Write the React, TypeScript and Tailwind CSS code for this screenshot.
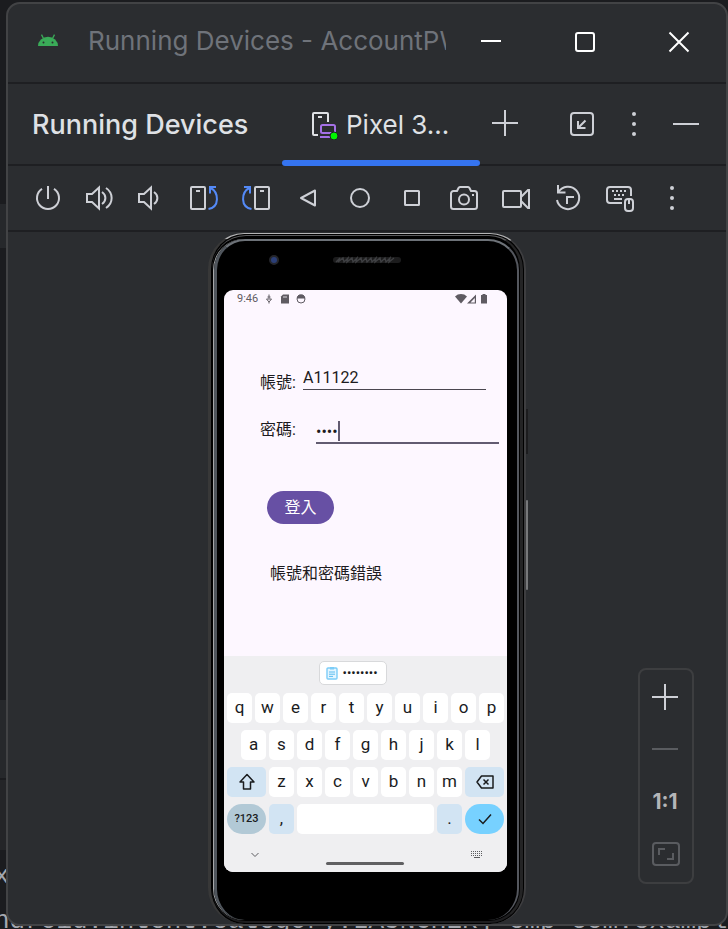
import type { ReactNode } from "react";

function Icon({ children }: { children: ReactNode }) {
  return (
    <svg
      viewBox="0 0 32 32"
      className="block size-8 shrink-0"
      fill="none"
      stroke="currentColor"
      strokeWidth="2"
      aria-hidden="true"
    >
      {children}
    </svg>
  );
}

function Dots() {
  return (
    <g fill="currentColor" stroke="none">
      <circle cx="16" cy="6" r="2" />
      <circle cx="16" cy="16" r="2" />
      <circle cx="16" cy="26" r="2" />
    </g>
  );
}

const speaker = <path d="M3 12h5l7-6.500v21L8 20H3z" />;
const rotate = (
  <>
    <rect x="3" y="5" width="14" height="22" rx="1" />
    <path d="M8 9h4" />
    <g stroke="#548af7">
      <path d="M28 5h-6v6.500" />
      <path d="M22 5.500C31.500 10.500 31.500 25 20.500 27" />
    </g>
  </>
);

const tools: { name: string; art: ReactNode }[] = [
  {
    name: "Power",
    art: (
      <>
        <path d="M16 4v13" />
        <path d="M10 6.800A11 11 0 1 0 22 6.800" />
      </>
    ),
  },
  {
    name: "Volume Up",
    art: (
      <>
        {speaker}
        <path d="M18 10c4.500 3 4.500 9 0 12M22 6c7.500 5 7.500 15 0 20" />
      </>
    ),
  },
  {
    name: "Volume Down",
    art: (
      <>
        {speaker}
        <path d="M18 10c4.500 3 4.500 9 0 12" />
      </>
    ),
  },
  { name: "Rotate Left", art: rotate },
  { name: "Rotate Right", art: <g transform="matrix(-1 0 0 1 32 0)">{rotate}</g> },
  { name: "Back", art: <path d="M23 8.500v15L9 16z" strokeLinejoin="round" /> },
  { name: "Home", art: <circle cx="16" cy="16" r="9" /> },
  { name: "Overview", art: <rect x="9" y="9" width="14" height="14" rx="0.500" /> },
  {
    name: "Take Screenshot",
    art: (
      <>
        <path
          d="M3 11.500A2.500 2.500 0 0 1 5.500 9H9l1.500-3A2 2 0 0 1 12 5h8a2 2 0 0 1 1.500 1L23 9h3.500a2.500 2.500 0 0 1 2.500 2.500v13a2.500 2.500 0 0 1-2.500 2.500h-21A2.500 2.500 0 0 1 3 24.500z"
          strokeLinejoin="round"
        />
        <circle cx="16" cy="17.500" r="5" />
        <path d="M24 13h2" />
      </>
    ),
  },
  {
    name: "Record Screen",
    art: (
      <>
        <rect x="3" y="9" width="18" height="16" rx="1" />
        <path d="M21 15l7-7h1v18h-1l-7-7" />
      </>
    ),
  },
  {
    name: "Snapshots",
    art: (
      <>
        <path d="M6 3v7.500h7.500" />
        <path d="M6.500 10A11.200 11.200 0 1 1 5 18" />
        <path d="M15 22v-7h7" />
      </>
    ),
  },
  {
    name: "Hardware Input",
    art: (
      <>
        <path d="M18 21H6a3 3 0 0 1-3-3V8a3 3 0 0 1 3-3h18a3 3 0 0 1 3 3v6" />
        <path d="M8 9h16M10 13h12" strokeDasharray="2 2" />
        <path d="M10 17h8" />
        <rect x="21" y="17" width="8" height="12" rx="3" />
        <path d="M25 17v5" />
      </>
    ),
  },
  { name: "More", art: <Dots /> },
];

function WindowTitle() {
  const control = "flex w-[94px] shrink-0 items-center justify-center pb-[2px] text-white";
  return (
    <header className="flex h-[80px] border-b-2 border-[#1e1f22] pl-[30px]">
      <svg viewBox="0 0 20 12" className="mt-[30px] h-3 w-5 shrink-0" aria-hidden="true">
        <path d="M0 12A10 9.300 0 0 1 20 12z" fill="#3aab58" />
        <path d="M5.500 4.500L3.500 .6M14.500 4.500L16.500 .6" stroke="#3aab58" strokeWidth="1.300" />
        <circle cx="5.500" cy="8.500" r="1" fill="#2b2d30" />
        <circle cx="14.500" cy="8.500" r="1" fill="#2b2d30" />
      </svg>
      <h1 className="-mr-[2px] ml-[30px] min-w-0 flex-1 overflow-hidden pt-[20px] text-[26px] leading-[34px] whitespace-nowrap text-[#6f737a]">
        Running Devices - AccountPW
      </h1>
      <button aria-label="Minimize" className={control}>
        <Icon>
          <path d="M6 15h20" />
        </Icon>
      </button>
      <button aria-label="Maximize" className={control}>
        <Icon>
          <rect x="7" y="7" width="18" height="18" rx="2" />
        </Icon>
      </button>
      <button aria-label="Close" className={control}>
        <Icon>
          <path d="M6.500 6.500l19 19M25.500 6.500l-19 19" />
        </Icon>
      </button>
    </header>
  );
}

function DeviceTabs() {
  const control = "flex w-[52px] shrink-0 items-center justify-center";
  return (
    <div className="flex h-[82px] border-b-2 border-[#1e1f22] pr-[14px] pl-[24px] text-[#ced0d6]">
      <h2 className="w-[250px] shrink-0 pt-[24px] text-[27px] leading-[34px] font-medium whitespace-nowrap text-[#dfe1e5]">
        Running Devices
      </h2>
      <button
        role="tab"
        aria-selected="true"
        className="relative flex w-[198px] shrink-0 items-start pt-[24px] pl-[26px] text-[26px] leading-[34px] whitespace-nowrap text-[#dfe1e5]"
      >
        <Icon>
          <path d="M10 27H6a1 1 0 0 1-1-1V6a1 1 0 0 1 1-1h13a1 1 0 0 1 1 1v8" />
          <path d="M10 9h4" />
          <g stroke="#a571e6">
            <rect x="13" y="17" width="14" height="8" rx="1.500" />
            <path d="M12 29h10" />
          </g>
          <circle cx="26" cy="28" r="4" fill="#00f500" stroke="#1e1f22" strokeWidth="1" />
        </Icon>
        <span className="ml-[6px]">Pixel 3...</span>
        <span className="absolute inset-x-0 -bottom-[2px] h-[6px] rounded-full bg-[#3574f0]" />
      </button>
      <button aria-label="Add device" className="flex w-[50px] shrink-0 items-center justify-center">
        <Icon>
          <path d="M3 15h26M16 2v26" />
        </Icon>
      </button>
      <div className="flex-1" />
      <button aria-label="Dock" className={control}>
        <Icon>
          <rect x="5" y="5" width="22" height="22" rx="3" />
          <path d="M19.500 12.500l-7.500 7.500M12 13v7h7.500" />
        </Icon>
      </button>
      <button aria-label="Options" className={control}>
        <Icon>
          <Dots />
        </Icon>
      </button>
      <button aria-label="Hide" className={control}>
        <Icon>
          <path d="M3 16h26" />
        </Icon>
      </button>
    </div>
  );
}

function Toolbar() {
  return (
    <div className="flex h-[66px] border-b-2 border-[#1e1f22] pl-[14px] text-[#ced0d6]">
      {tools.map((tool) => (
        <button
          key={tool.name}
          aria-label={tool.name}
          className="flex w-[52px] shrink-0 items-center justify-center"
        >
          <Icon>{tool.art}</Icon>
        </button>
      ))}
    </div>
  );
}

function StatusBar() {
  return (
    <div className="flex h-[18px] items-center pr-[18px] pl-[13px] text-[#5f5b62]">
      <span className="w-[26px] text-[11px] leading-[18px]">9:46</span>
      <svg viewBox="0 0 46 12" className="h-3 w-[46px]" fill="none" stroke="currentColor" aria-hidden="true">
        <path d="M6 1.500v4M4.500 4h3M3.500 6L6 9l2.500-3zM6 9v1.500" />
        <path d="M20 1.500h6v9h-8v-7z" fill="currentColor" stroke="none" />
        <path d="M21 3v2M23 3v2" stroke="#fdf7ff" strokeWidth="0.800" />
        <circle cx="38" cy="6" r="4" />
        <path d="M34 5l2-3h4l2 3z" fill="currentColor" />
      </svg>
      <div className="flex-1" />
      <svg viewBox="0 0 34 12" className="h-3 w-[34px]" fill="currentColor" aria-hidden="true">
        <path d="M0 3.500a8.500 8.500 0 0 1 12 0L6 10.500z" />
        <path d="M21 1.500v9H12zM19.800 5L15.500 9.500h4.300z" fillRule="evenodd" />
        <path d="M26 2h1.500V1h3v1H32v8.500h-6z" />
      </svg>
    </div>
  );
}

function LoginForm() {
  return (
    <form className="flex flex-1 flex-col items-start text-[16px] leading-[24px] text-[#1d1b20]">
      <div className="mt-[58px] flex items-end pl-[36px]">
        <label htmlFor="account" className="w-[43px]">
          帳號:
        </label>
        <input
          id="account"
          defaultValue="A11122"
          className="mb-[5px] h-[24px] w-[183px] border-b border-[#4a464f] bg-transparent outline-none"
        />
      </div>
      <div className="mt-[23px] flex items-start pl-[36px]">
        <label htmlFor="password" className="w-[56px]">
          密碼:
        </label>
        <div className="relative">
          <input
            id="password"
            type="password"
            defaultValue="1112"
            className="block h-[26px] w-[183px] border-b-2 border-[#625b71] bg-transparent pt-[2px] outline-none"
          />
          <span className="absolute top-[3px] left-[22px] h-[20px] w-[2px] bg-[#625b71]" />
        </div>
      </div>
      <button
        type="button"
        className="mt-[47px] ml-[43px] h-[33px] w-[67px] rounded-full bg-[#6750a4] text-white"
      >
        登入
      </button>
      <output className="mt-[38px] ml-[46px]">帳號和密碼錯誤</output>
    </form>
  );
}

function Key({ label, kind = "flex-1 bg-white" }: { label: string; kind?: string }) {
  return (
    <button className={`flex h-[30px] min-w-0 items-center justify-center rounded-[5px] text-[17px] ${kind}`}>
      {label}
    </button>
  );
}

function Keyboard() {
  return (
    <div className="flex flex-col bg-[#efeff1] text-[#1a1c1e]">
      <div className="flex h-[37px] justify-center pt-[5px] pr-[26px]">
        <button
          aria-label="Paste"
          className="flex h-[24px] w-[68px] items-center rounded-[5px] border border-[#d8d9db] bg-white pl-[6px]"
        >
          <svg viewBox="0 0 12 14" className="h-[14px] w-3" aria-hidden="true">
            <rect x="1" y="2" width="10" height="11" rx="1" fill="#e4f5ff" stroke="#7ccdf8" strokeWidth="1.400" />
            <path d="M4 1h4v2.500H4z" fill="#7ccdf8" />
            <path d="M3 6h6M3 8.200h6M3 10.400h4" stroke="#5cbdf0" />
          </svg>
          <span className="ml-[5px] text-[13px] leading-[20px]">••••••••</span>
        </button>
      </div>
      <div className="flex flex-col gap-[7px] px-[3px]">
        <div className="flex gap-[3px]">
          {"qwertyuiop".split("").map((k) => (
            <Key key={k} label={k} />
          ))}
        </div>
        <div className="flex gap-[3px] px-[14px]">
          {"asdfghjkl".split("").map((k) => (
            <Key key={k} label={k} />
          ))}
        </div>
        <div className="flex gap-[3px]">
          <button aria-label="Shift" className="flex h-[30px] w-[39px] items-center justify-center rounded-[5px] bg-[#d2e4f3]">
            <svg viewBox="0 0 18 18" className="size-[18px]" fill="none" stroke="currentColor" strokeWidth="1.500" aria-hidden="true">
              <path d="M9 1.500l7 7.500h-3.500v7h-7V9H2z" strokeLinejoin="round" />
            </svg>
          </button>
          {"zxcvbnm".split("").map((k) => (
            <Key key={k} label={k} />
          ))}
          <button aria-label="Backspace" className="flex h-[30px] w-[39px] items-center justify-center rounded-[5px] bg-[#d2e4f3]">
            <svg viewBox="0 0 18 16" className="h-4 w-[18px]" fill="none" stroke="currentColor" strokeWidth="1.500" aria-hidden="true">
              <path d="M5.500 2H17v12H5.500L1 8z" strokeLinejoin="round" />
              <path d="M7.500 5.500l5 5M12.500 5.500l-5 5" />
            </svg>
          </button>
        </div>
        <div className="flex gap-[3px]">
          <button className="h-[30px] w-[39px] rounded-full bg-[#b2c9d6] text-[11px] font-medium">?123</button>
          <Key label="," kind="w-[25px] bg-[#d2e4f3]" />
          <button aria-label="Space" className="h-[30px] flex-1 rounded-[5px] bg-white" />
          <Key label="." kind="w-[25px] bg-[#d2e4f3]" />
          <button aria-label="Enter" className="flex h-[30px] w-[39px] items-center justify-center rounded-full bg-[#77d1ff]">
            <svg viewBox="0 0 14 12" className="h-3 w-[14px]" fill="none" stroke="currentColor" strokeWidth="1.500" aria-hidden="true">
              <path d="M1 6.500l4 4L13 1.500" />
            </svg>
          </button>
        </div>
      </div>
      <div className="relative flex h-[38px] items-start justify-between pt-[14px] pr-[24px] pl-[26px] text-[#5c5d60]">
        <svg viewBox="0 0 10 12" className="h-3 w-[10px]" fill="none" stroke="currentColor" aria-hidden="true">
          <path d="M1.500 5L5 8.500 8.500 5" />
        </svg>
        <svg viewBox="0 0 12 12" className="size-3" fill="none" stroke="currentColor" aria-hidden="true">
          <path d="M0 3.500h12M0 5.500h12M0 7.500h12" strokeDasharray="1 1" />
          <path d="M3 9.500h6" />
        </svg>
        <span className="absolute bottom-[7px] left-[102px] h-[3px] w-[78px] rounded-full bg-[#606062]" />
      </div>
    </div>
  );
}

function Phone() {
  return (
    <div className="relative mx-auto h-[691px] w-[318px] rounded-[36px] border-t border-r-[2px] border-l-[3px] border-t-[#b4b4b5] border-r-[#3e3e40] border-b-[#1c1c1e] border-l-[#383838] bg-black p-[1px]">
      <span className="absolute top-[175px] -right-[4px] h-[45px] w-[2px] bg-[#1c1c1e]" />
      <span className="absolute top-[266px] -right-[4px] h-[90px] w-[2px] rounded-full bg-[#77787a]" />
      <div className="h-full rounded-[34px] border-t border-r-[3px] border-b-2 border-t-[#5b5b5d] border-r-[#242425] border-b-[#1d1d1f] p-[1px] pt-[3px]">
        <div className="h-full rounded-[31px] border-l border-l-[#a5a7a9]">
          <div className="flex h-full flex-col rounded-[31px] border-t-[2px] border-r-[2px] border-l-[3px] border-t-[#6d7278] border-r-[#54575e] border-b-black border-l-[#50565d] pr-[10px] pl-[7px]">
            <div className="flex h-[49px] shrink-0 items-start pt-[14px] pl-[45px]">
              <span className="size-[10px] rounded-full border-2 border-[#25262b] bg-[#2b3f78]" />
              <svg viewBox="0 0 70 8" className="mt-[1px] ml-[53px] h-2 w-[70px]" fill="none" stroke="#3f4043" strokeWidth="1.300" aria-hidden="true">
                <rect x="1" y="1" width="68" height="6" rx="3" fill="#1c1c1d" stroke="none" />
                <path d="M4 6l4-4-2 4 5-4 1 4 4-4-1 4 5-4 1 4 4-4-1 4 5-4 1 4 4-4 1 4 4-4 1 4 4-4-1 4 5-4 1 4 4-4 1 4 4-4-1 4 5-4" />
              </svg>
            </div>
            <div className="flex h-[582px] shrink-0 flex-col overflow-hidden rounded-[9px] bg-[#fdf7ff] font-['Roboto','Noto_Sans_CJK_TC',sans-serif]">
              <StatusBar />
              <LoginForm />
              <Keyboard />
            </div>
          </div>
        </div>
      </div>
    </div>
  );
}

function ZoomControls() {
  return (
    <div className="absolute right-[32px] bottom-[40px] flex w-[56px] flex-col items-center rounded-[8px] border-2 border-[#3d3e40] pr-[2px] pb-[2px] text-[#ced0d6]">
      <button aria-label="Zoom in" className="flex h-[53px] w-full items-center justify-center">
        <Icon>
          <path d="M3 16h26M16 3v26" />
        </Icon>
      </button>
      <button aria-label="Zoom out" className="flex h-[52px] w-full items-center justify-center text-[#5a5c60]">
        <Icon>
          <path d="M3 16h26" />
        </Icon>
      </button>
      <button className="flex h-[53px] w-full items-center justify-center text-[21px] leading-[24px] font-bold text-[#b4b5b8]">
        1:1
      </button>
      <button aria-label="Fit" className="flex h-[52px] w-full items-center justify-center text-[#5a5c60]">
        <Icon>
          <rect x="4" y="5" width="26" height="22" rx="3" />
          <path d="M10 17v-6h6M24 15v6h-6" />
        </Icon>
      </button>
    </div>
  );
}

function EditorBackdrop() {
  return (
    <div
      aria-hidden="true"
      className="absolute inset-0 flex flex-col overflow-hidden bg-[#1b1c1f] font-['Liberation_Mono',monospace] text-[26px] leading-[45px] whitespace-pre text-[#a4a7ae]"
    >
      <div className="h-[204px] shrink-0" />
      <div className="h-[44px] w-2 shrink-0 bg-[#26282b]" />
      <div className="flex-1" />
      <div className="h-[80px] w-2 shrink-0 border-b-2 border-[#1b1c1f] bg-[#26282b]" />
      <div className="h-[70px] w-2 shrink-0 bg-[#242528]" />
      <div className="-mb-[15px] shrink-0 pt-[4px]">
        <div className="-ml-[6px]">x</div>
        <div className="-ml-[6px]">ndroid.intent.category.LAUNCHER] cmp=com.example</div>
      </div>
    </div>
  );
}

export default function App() {
  return (
    <div className="relative flex min-h-screen flex-col overflow-hidden pt-[2px] pb-[3px] pl-[6px] font-['Inter','Noto_Sans',sans-serif]">
      <EditorBackdrop />
      <main className="relative flex flex-1 flex-col rounded-[14px] border-2 border-[#424345] bg-[#2b2d30]">
        <WindowTitle />
        <DeviceTabs />
        <Toolbar />
        <section aria-label="Pixel 3a" className="relative flex-1 pt-[1px]">
          <Phone />
          <ZoomControls />
        </section>
      </main>
    </div>
  );
}
